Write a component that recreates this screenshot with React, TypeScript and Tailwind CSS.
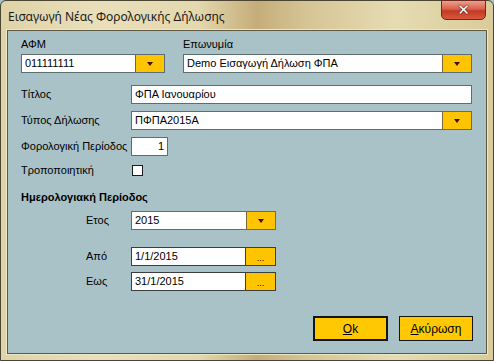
import React from "react";

const font = { fontFamily: '"Liberation Sans", Arial, sans-serif' };

function Arrow() {
  return (
    <div className="w-0 h-0 mt-[1px] border-l-[3px] border-r-[3px] border-t-[4px] border-l-transparent border-r-transparent border-t-[#3a1010]" />
  );
}

function Combo({ value, width }: { value: string; width: number }) {
  return (
    <div className="flex h-[19px] border border-[#5e6d6d] bg-white" style={{ width }}>
      <div className="flex-1 flex items-center pl-[3px] text-[11px] text-black leading-none">{value}</div>
      <div className="w-[29px] h-full bg-[#ffc400] border-l border-[#7a6a3a] flex items-center justify-center">
        <Arrow />
      </div>
    </div>
  );
}

function DateBox({ value }: { value: string }) {
  return (
    <div className="flex h-[19px] w-[145px] border border-[#3d3d3d] bg-white">
      <div className="flex-1 flex items-center pl-[3px] text-[11px] text-black leading-none">{value}</div>
      <div className="w-[30px] h-full bg-[#ffc400] border-l border-[#3d3d3d] flex items-end justify-center pb-[2px] text-[9px] leading-none text-black">
        ...
      </div>
    </div>
  );
}

function TextBox({ value, width, right }: { value: string; width: number; right?: boolean }) {
  return (
    <div
      className={`flex items-center h-[19px] border border-[#5e6d6d] bg-white text-[11px] text-black leading-none ${right ? "justify-end pr-[3px]" : "pl-[3px]"}`}
      style={{ width }}
    >
      {value}
    </div>
  );
}

export default function App() {
  return (
    <div className="w-[494px] h-[361px] bg-[#a9c2c7]" style={font}>
      <div className="w-[494px] h-[361px] flex flex-col rounded-t-[6px] border border-[#4b4634] bg-[linear-gradient(90deg,#dfd3a8_0%,#e9dfba_20%,#e4d8ae_40%,#c5ad79_52%,#d6c495_62%,#e6dcb2_80%,#d9cb9a_100%)]">
        {/* title bar */}
        <div className="relative h-[29px] flex items-center pl-[7px]">
          <span className="text-[12px] text-[#1a1a1a] mt-[3px]" style={{ fontFamily: '"Noto Sans", "Open Sans", sans-serif' }}>
            Εισαγωγή Νέας Φορολογικής Δήλωσης
          </span>
          <div className="absolute right-[7px] top-[-1px] w-[45px] h-[20px] rounded-b-[5px] border border-[#6b2a1f] bg-[linear-gradient(180deg,#eaa08e_0%,#d9604a_45%,#c23a22_55%,#d85a3e_100%)] flex items-center justify-center">
            <span className="text-white font-bold text-[15px] leading-none" style={{ fontFamily: '"DejaVu Sans", sans-serif', textShadow: "0 0 1px #3a1a10, 0 0 1px #3a1a10, 0 0 1px #3a1a10" }}>
              ✕
            </span>
          </div>
        </div>
        {/* content */}
        <div className="flex-1 mx-[6px] mb-[6px] border border-[#5e5842] p-0 bg-[#a9c2c7] shadow-[0_0_0_1px_#efe6c6]">
          <div className="flex flex-col pl-[13px] pt-[8px] text-[11px] text-black leading-none">
            {/* row 1 */}
            <div className="flex gap-[18px]">
              <div className="flex flex-col gap-[3px]">
                <span className="h-[12px]">ΑΦΜ</span>
                <Combo value="011111111" width={144} />
              </div>
              <div className="flex flex-col gap-[3px]">
                <span className="h-[12px]">Επωνυμία</span>
                <Combo value="Demo Εισαγωγή Δήλωση ΦΠΑ" width={289} />
              </div>
            </div>
            {/* Τίτλος */}
            <div className="flex items-center mt-[12px]">
              <span className="w-[110px]">Τίτλος</span>
              <TextBox value="ΦΠΑ Ιανουαρίου" width={341} />
            </div>
            <div className="flex items-center mt-[7px]">
              <span className="w-[110px]">Τύπος Δήλωσης</span>
              <Combo value="ΠΦΠΑ2015Α" width={341} />
            </div>
            <div className="flex items-center mt-[7px]">
              <span className="w-[110px]">Φορολογική Περίοδος</span>
              <TextBox value="1" width={37} right />
            </div>
            <div className="flex items-center mt-[9px]">
              <span className="w-[111px]">Τροποποιητική</span>
              <div className="w-[11px] h-[11px] border border-[#1a1a1a] bg-white" />
            </div>
            <div className="mt-[16px] font-bold text-[11px]">Ημερολογιακή Περίοδος</div>
            <div className="flex items-center mt-[8px]">
              <span className="w-[45px] ml-[65px]">Ετος</span>
              <Combo value="2015" width={145} />
            </div>
            <div className="flex items-center mt-[17px]">
              <span className="w-[45px] ml-[65px]">Από</span>
              <DateBox value="1/1/2015" />
            </div>
            <div className="flex items-center mt-[6px]">
              <span className="w-[45px] ml-[65px]">Εως</span>
              <DateBox value="31/1/2015" />
            </div>
            <div className="flex justify-end gap-[11px] mt-[25px] pr-[13px]">
              <div className="w-[75px] h-[25px] border-2 border-[#141414] bg-[#ffc800] flex items-center justify-center text-[12px]">
                <span><span className="underline">O</span>k</span>
              </div>
              <div className="w-[74px] h-[25px] border border-[#141414] bg-[#ffc800] flex items-center justify-center text-[12px]">
                <span><span className="underline">Α</span>κύρωση</span>
              </div>
            </div>
          </div>
        </div>
      </div>
    </div>
  );
}
